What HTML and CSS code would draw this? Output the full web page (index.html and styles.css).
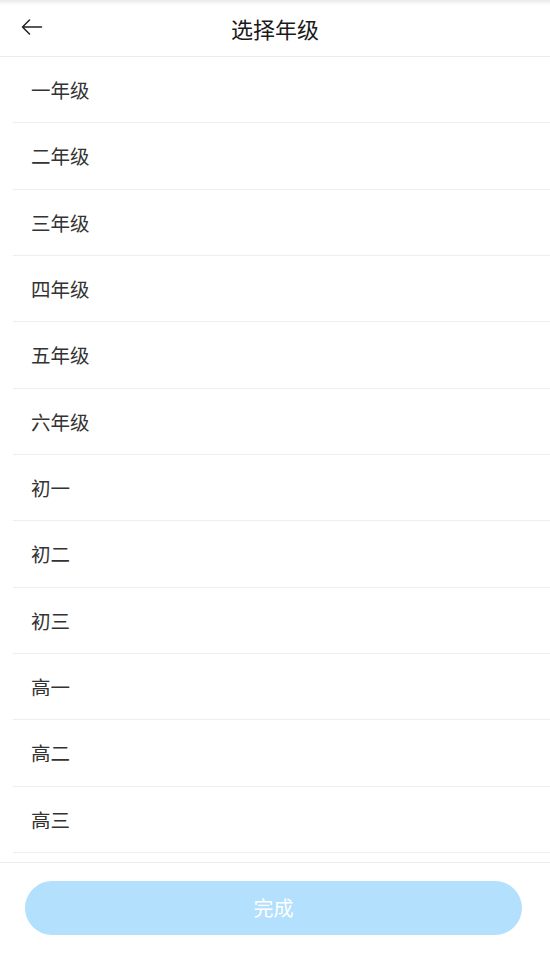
FILE: index.html
```html
<!DOCTYPE html>
<html lang="zh">
<head>
<meta charset="utf-8">
<link rel="stylesheet" href="styles.css">
</head>
<body>
<div class="page">
  <header class="nav">
    <span class="back">
      <svg width="22" height="18" viewBox="0 0 22 18"><path d="M20.5 9H1.5M8.5 2L1.5 9l7 7" fill="none" stroke="#222" stroke-width="1.5" stroke-linecap="round" stroke-linejoin="round"/></svg>
    </span>
    <h1 class="title">选择年级</h1>
  </header>
  <ul class="list">
    <li class="item">一年级</li>
    <li class="item">二年级</li>
    <li class="item">三年级</li>
    <li class="item">四年级</li>
    <li class="item">五年级</li>
    <li class="item">六年级</li>
    <li class="item">初一</li>
    <li class="item">初二</li>
    <li class="item">初三</li>
    <li class="item">高一</li>
    <li class="item">高二</li>
    <li class="item">高三</li>
  </ul>
  <footer class="footer">
    <button class="done">完成</button>
  </footer>
</div>
</body>
</html>
```
FILE: styles.css
```css
* { box-sizing: border-box; }
html, body { margin: 0; padding: 0; background: #fff; }
body {
  font-family: "Noto Sans CJK SC", "Noto Sans", sans-serif;
  width: 550px;
  height: 965px;
  overflow: hidden;
}
.page { display: flex; flex-direction: column; height: 965px; }
.nav {
  position: relative;
  height: 57px;
  border-bottom: 1px solid #ececec;
  display: flex;
  align-items: center;
  justify-content: center;
  background: linear-gradient(#e9e9e9, #fff 5px);
}
.back {
  position: absolute;
  left: 21px;
  top: 18px;
  display: flex;
}
.title {
  margin: 0;
  font-size: 22px;
  font-weight: 400;
  color: #1a1a1a;
  line-height: 1;
}
.list { list-style: none; margin: 0; padding: 0 0 0 13px; }
.item {
  height: 66.33px;
  border-bottom: 1px solid #eeeeee;
  display: flex;
  align-items: center;
  padding-left: 18px;
  font-size: 19.5px;
  color: #333;
}
.footer {
  margin-top: 9px;
  border-top: 1px solid #ececec;
  padding: 18px 28px 0 25px;
}
.done {
  display: block;
  width: 100%;
  height: 54px;
  border: none;
  border-radius: 27px;
  background: #b3e0fd;
  color: #fff;
  font-family: "Noto Sans CJK SC", "Noto Sans", sans-serif;
  font-size: 20px;
}
```
